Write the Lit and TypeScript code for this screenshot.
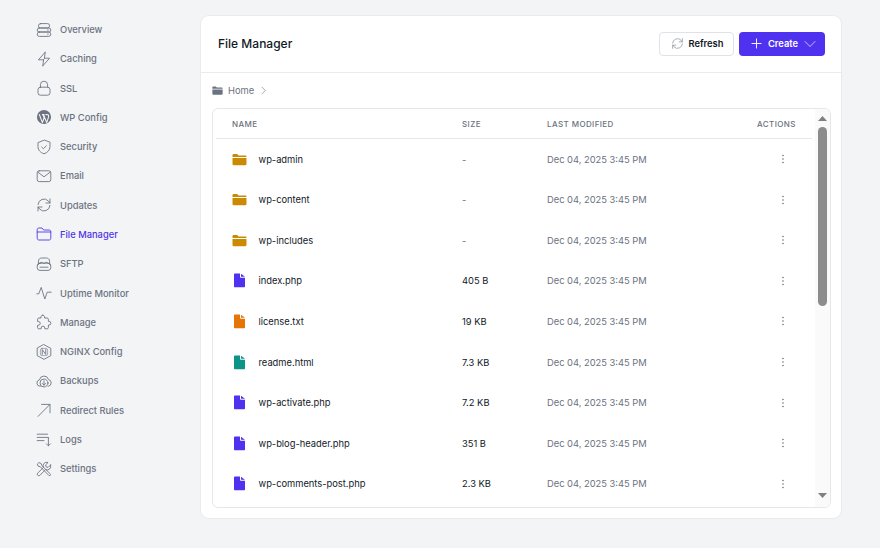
import { LitElement, html, css, svg } from "lit";
import { customElement } from "lit/decorators.js";

const navIcons: Record<string, unknown> = {
  overview: svg`<rect x="3" y="2" width="14" height="5.500" rx="2.750"/><rect x="1.500" y="7.500" width="17" height="5" rx="2.500"/><rect x="1.500" y="12.500" width="17" height="5.500" rx="2.750"/><path d="M14.500 10h.8M14.500 15.200h.8"/>`,
  caching: svg`<path d="M11.500 1.500 3 11h6.500M8.500 18.500l8.500-9.500h-6.500M11.500 1.500l-1 7.500M8.500 18.500l1-7.500"/>`,
  ssl: svg`<rect x="2.500" y="9" width="15" height="10" rx="3"/><path d="M5.500 9V6a4.500 4.500 0 0 1 9 0v3"/>`,
  wp: svg`<circle cx="10" cy="10" r="8.800" fill="currentColor" stroke="none"/><path d="M4.200 7 8 17l2.200-6-1.600-4M8 7h2.200M9.500 7l3.800 10 2.400-6.900c.5-1.300 0-2.200-.7-3.100M12.300 7h1.600" stroke="#f3f4f6" stroke-width="1.400"/>`,
  security: svg`<path d="M10 1.500 2.500 4.500v5c0 4.500 3.200 7.500 7.500 9 4.300-1.500 7.500-4.500 7.500-9v-5z"/><path d="m7 10 2.200 2.200L13 8.500"/>`,
  email: svg`<rect x="1.500" y="3.500" width="17" height="13.500" rx="2.500"/><path d="m2 5 8 6 8-6"/>`,
  updates: svg`<path d="M2.500 9.500A7.500 7.500 0 0 1 15.500 5l2 2.500M17.500 2.500v5h-5M17.500 10.500A7.500 7.500 0 0 1 4.500 15l-2-2.500M2.500 17.500v-5h5"/>`,
  files: svg`<path d="M1.500 6V4.500c0-1.100.9-2 2-2h4l2 2.500h7c1.100 0 2 .9 2 2v8.500c0 1.100-.9 2-2 2h-13c-1.100 0-2-.9-2-2zM1.500 7.500h17"/>`,
  sftp: svg`<rect x="1.500" y="9" width="17" height="9" rx="3.500"/><path d="M3 10V6.500C3 4 5 2.500 7 2.500h6c2 0 4 1.500 4 4V10M2 11c2.500-2.500 4-3 6-3 1 0 1 1.500 2 1.500S11 8 12 8c2 0 3.500.5 6 3M5 14h10"/>`,
  uptime: svg`<path d="M1 11h2.500l3-8 4.500 14.500 3-8.500h5"/>`,
  manage: svg`<path d="M8.500 1.500c1.300 0 2.200 1 2.200 2.200V5H14c.8 0 1.500.7 1.500 1.500v2.700h.8a2.300 2.300 0 0 1 0 4.600h-.8V17c0 .8-.7 1.500-1.500 1.500h-3v-1a2.300 2.300 0 0 0-4.600 0v1h-3c-.8 0-1.400-.7-1.400-1.500v-3h1a2.300 2.300 0 0 0 0-4.600h-1V6.500C2 5.700 2.700 5 3.500 5h2.800V3.700c0-1.200 1-2.200 2.200-2.200z"/>`,
  nginx: svg`<path d="M10 .8 18.500 5.500v9L10 19.200 1.500 14.500v-9z"/><rect x="5.500" y="5.500" width="9" height="9" rx="2" stroke-width=".7"/><path d="M7.800 13V7l4.400 6V7"/>`,
  backups: svg`<path d="M5.500 16.500H5A4 4 0 0 1 4.300 8.600a5.800 5.800 0 0 1 11.300-.5 4.300 4.300 0 0 1 0 8.400H15"/><circle cx="10" cy="12.500" r="5"/><path d="M10 9.800v5.400M7.800 13l2.200 2.200 2.200-2.200"/>`,
  redirect: svg`<path d="M2.500 18 17.500 3M7 3h10.500v10.500"/>`,
  logs: svg`<path d="M1.500 4h13M1.500 8h13M1.500 12h8.500M15.500 8v10.500M13 16l2.500 2.500L18 16"/>`,
  settings: svg`<path d="M2 3.500 3.500 2l3 1.200.8 2.500L18 16.300a1.700 1.700 0 0 1-.1 1.600 1.700 1.700 0 0 1-1.800.2L5.600 7.300 3 6.500zM18.200 5l-3 3-2.500-.6-.6-2.500 3-3A4.500 4.500 0 0 0 9.300 8L2 15.200a2 2 0 0 0 2.800 2.800L12 10.700A4.500 4.500 0 0 0 18.200 5z"/>`,
};

const navItems = [
  ["overview", "Overview"],
  ["caching", "Caching"],
  ["ssl", "SSL"],
  ["wp", "WP Config"],
  ["security", "Security"],
  ["email", "Email"],
  ["updates", "Updates"],
  ["files", "File Manager"],
  ["sftp", "SFTP"],
  ["uptime", "Uptime Monitor"],
  ["manage", "Manage"],
  ["nginx", "NGINX Config"],
  ["backups", "Backups"],
  ["redirect", "Redirect Rules"],
  ["logs", "Logs"],
  ["settings", "Settings"],
];

const files = [
  ["folder", "wp-admin", "-"],
  ["folder", "wp-content", "-"],
  ["folder", "wp-includes", "-"],
  ["php", "index.php", "405 B"],
  ["txt", "license.txt", "19 KB"],
  ["html", "readme.html", "7.3 KB"],
  ["php", "wp-activate.php", "7.2 KB"],
  ["php", "wp-blog-header.php", "351 B"],
  ["php", "wp-comments-post.php", "2.3 KB"],
];

@customElement("app-root")
export class AppRoot extends LitElement {
  static styles = css`
    :host {
      display: flex;
      height: 548px;
      overflow: hidden;
      background: #f3f4f6;
      font-family: Inter, "Liberation Sans", sans-serif;
      color: #111827;
    }

    .sidebar {
      width: 201px;
      flex: none;
      box-sizing: border-box;
      padding: 15px 0 0 36px;
      display: grid;
      grid-auto-rows: 29.27px;
      align-content: start;
    }

    .nav-item {
      display: flex;
      align-items: center;
      gap: 8px;
      font-size: 9.33px;
      font-weight: 500;
      color: #6b7280;
    }

    .nav-item.active {
      color: #4f33e6;
    }

    .nav-item svg {
      width: 16px;
      height: 16px;
      fill: none;
      stroke: currentColor;
      stroke-width: 1.1;
      stroke-linecap: round;
      stroke-linejoin: round;
      flex: none;
    }

    .card {
      margin-top: 16px;
      width: 640px;
      height: 502px;
      background: #fff;
      border-radius: 8px;
      box-shadow: 0 0 0 1px #e9ebef;
      display: flex;
      flex-direction: column;
      overflow: hidden;
    }

    .card-head {
      height: 57px;
      flex: none;
      box-sizing: border-box;
      padding: 0 16px 1px 17px;
      display: flex;
      align-items: center;
      justify-content: space-between;
      border-bottom: 1px solid #e9ebef;
    }

    h1 {
      margin: 0;
      font-size: 12px;
      font-weight: 500;
      color: #111827;
    }

    .actions {
      display: flex;
      gap: 5px;
    }

    .btn {
      height: 24px;
      box-sizing: border-box;
      border-radius: 4px;
      display: flex;
      align-items: center;
      font-size: 9.33px;
      font-weight: 600;
    }

    .btn svg {
      fill: none;
      stroke: currentColor;
      stroke-linecap: round;
      stroke-linejoin: round;
      flex: none;
    }

    .btn-light {
      width: 75px;
      padding-left: 11px;
      gap: 4.5px;
      background: #fff;
      border: 1px solid #e0e2e7;
      color: #111827;
    }

    .btn-light svg {
      width: 13px;
      height: 13px;
      color: #8b919c;
      stroke-width: 1.1;
    }

    .btn-primary {
      width: 86px;
      padding-left: 12px;
      background: #4f31f0;
      color: #fff;
    }

    .btn-primary .plus {
      width: 11px;
      height: 11px;
      margin-right: 6px;
    }

    .btn-primary .chev {
      width: 12px;
      height: 12px;
      margin-left: 5.5px;
      stroke-width: 0.7;
    }

    .crumbs {
      height: 35px;
      flex: none;
      box-sizing: border-box;
      padding-left: 11px;
      display: flex;
      align-items: center;
      gap: 5px;
      font-size: 9.33px;
      color: #6b7280;
    }

    .crumbs .home {
      width: 11px;
      height: 11px;
      fill: #6b7280;
    }

    .crumbs .sep {
      width: 9px;
      height: 9px;
      fill: none;
      stroke: #9ca3af;
      stroke-width: 1;
    }

    .table-box {
      margin-left: 11px;
      width: 619px;
      height: 400px;
      box-sizing: border-box;
      border: 1px solid #e5e7eb;
      border-radius: 6px;
      display: flex;
      overflow: hidden;
    }

    .table {
      flex: 1;
      min-width: 0;
      overflow: hidden;
    }

    .scrollbar {
      width: 15px;
      flex: none;
      box-sizing: border-box;
      padding: 7px 0 9px;
      background: #fafafa;
      display: flex;
      flex-direction: column;
      align-items: center;
    }

    .scrollbar svg {
      width: 9px;
      height: 5px;
      fill: #808080;
      flex: none;
    }

    .thumb {
      width: 9px;
      height: 179px;
      margin-top: 6px;
      border-radius: 5px;
      background: #8c8c8c;
    }

    .scrollbar .down {
      margin-top: auto;
    }

    .row {
      display: grid;
      grid-template-columns: 230px 85px 210px 1fr;
      align-items: center;
      padding-left: 16px;
      margin-left: 3px;
      height: 40.55px;
      font-size: 9.33px;
      color: #111827;
    }

    .row.head {
      height: 29px;
      margin-right: 3px;
      border-bottom: 1px solid #e5e7eb;
      font-size: 8px;
      font-weight: 500;
      letter-spacing: 0.4px;
      color: #6b7280;
    }

    .name {
      display: flex;
      align-items: center;
      gap: 11.5px;
    }

    .name svg {
      width: 15px;
      height: 15px;
      flex: none;
    }

    .muted {
      color: #6b7280;
    }

    .dots {
      width: 4px;
      height: 12px;
      margin-left: 24px;
      fill: #6b7280;
    }
  `;

  private fileIcon(kind: string) {
    if (kind === "folder") {
      return html`<svg viewBox="0 0 15 15"><path fill="#ca8a04" d="M.5 3.200C.5 2.500 1 2 1.700 2h3.500l1.300 1.500h6.800c.7 0 1.200.5 1.200 1.200v.3H.5zM.5 6h14v6c0 .7-.5 1.200-1.200 1.200H1.700C1 13.200.5 12.700.5 12z"/></svg>`;
    }
    const colors: Record<string, string> = { php: "#4f31f0", txt: "#e57506", html: "#0d9488" };
    return html`<svg viewBox="0 0 15 15"><path fill=${colors[kind]} d="M2 1.200C2 .8 2.400.5 2.800.5H8v3.200c0 .6.500 1 1 1h4v8.600c0 .6-.4 1-1 1H3c-.6 0-1-.4-1-1zM9 .8l4 3H9z"/></svg>`;
  }

  render() {
    return html`
      <nav class="sidebar">
        ${navItems.map(
          ([icon, label]) => html`
            <div class="nav-item ${icon === "files" ? "active" : ""}">
              <svg viewBox="0 0 20 20">${navIcons[icon]}</svg>
              <span>${label}</span>
            </div>
          `
        )}
      </nav>

      <section class="card">
        <header class="card-head">
          <h1>File Manager</h1>
          <div class="actions">
            <div class="btn btn-light">
              <svg viewBox="0 0 20 20">${navIcons.updates}</svg>
              Refresh
            </div>
            <div class="btn btn-primary">
              <svg class="plus" viewBox="0 0 12 12"><path d="M6 1v10M1 6h10"/></svg>
              Create
              <svg class="chev" viewBox="0 0 12 12"><path d="M1 3.500l5 5 5-5"/></svg>
            </div>
          </div>
        </header>

        <div class="crumbs">
          <svg class="home" viewBox="0 0 15 15"><path d="M.5 3.200C.5 2.500 1 2 1.700 2h3.500l1.300 1.500h6.800c.7 0 1.200.5 1.200 1.200v.3H.5zM.5 6h14v6c0 .7-.5 1.200-1.200 1.200H1.700C1 13.200.5 12.700.5 12z"/></svg>
          <span>Home</span>
          <svg class="sep" viewBox="0 0 10 10"><path d="M3 1l4 4-4 4"/></svg>
        </div>

        <div class="table-box">
          <div class="table">
            <div class="row head">
              <span>NAME</span>
              <span>SIZE</span>
              <span>LAST MODIFIED</span>
              <span>ACTIONS</span>
            </div>
            ${files.map(
              ([kind, name, size]) => html`
                <div class="row">
                  <div class="name">${this.fileIcon(kind)}<span>${name}</span></div>
                  <span class=${size === "-" ? "muted" : ""}>${size}</span>
                  <span class="muted">Dec 04, 2025 3:45 PM</span>
                  <svg class="dots" viewBox="0 0 4 12"><circle cx="2" cy="2.500" r=".8"/><circle cx="2" cy="6" r=".8"/><circle cx="2" cy="9.500" r=".8"/></svg>
                </div>
              `
            )}
          </div>
          <div class="scrollbar">
            <svg viewBox="0 0 9 5"><path d="M4.500 0 9 5H0z"/></svg>
            <div class="thumb"></div>
            <svg class="down" viewBox="0 0 9 5"><path d="M0 0h9L4.500 5z"/></svg>
          </div>
        </div>
      </section>
    `;
  }
}
